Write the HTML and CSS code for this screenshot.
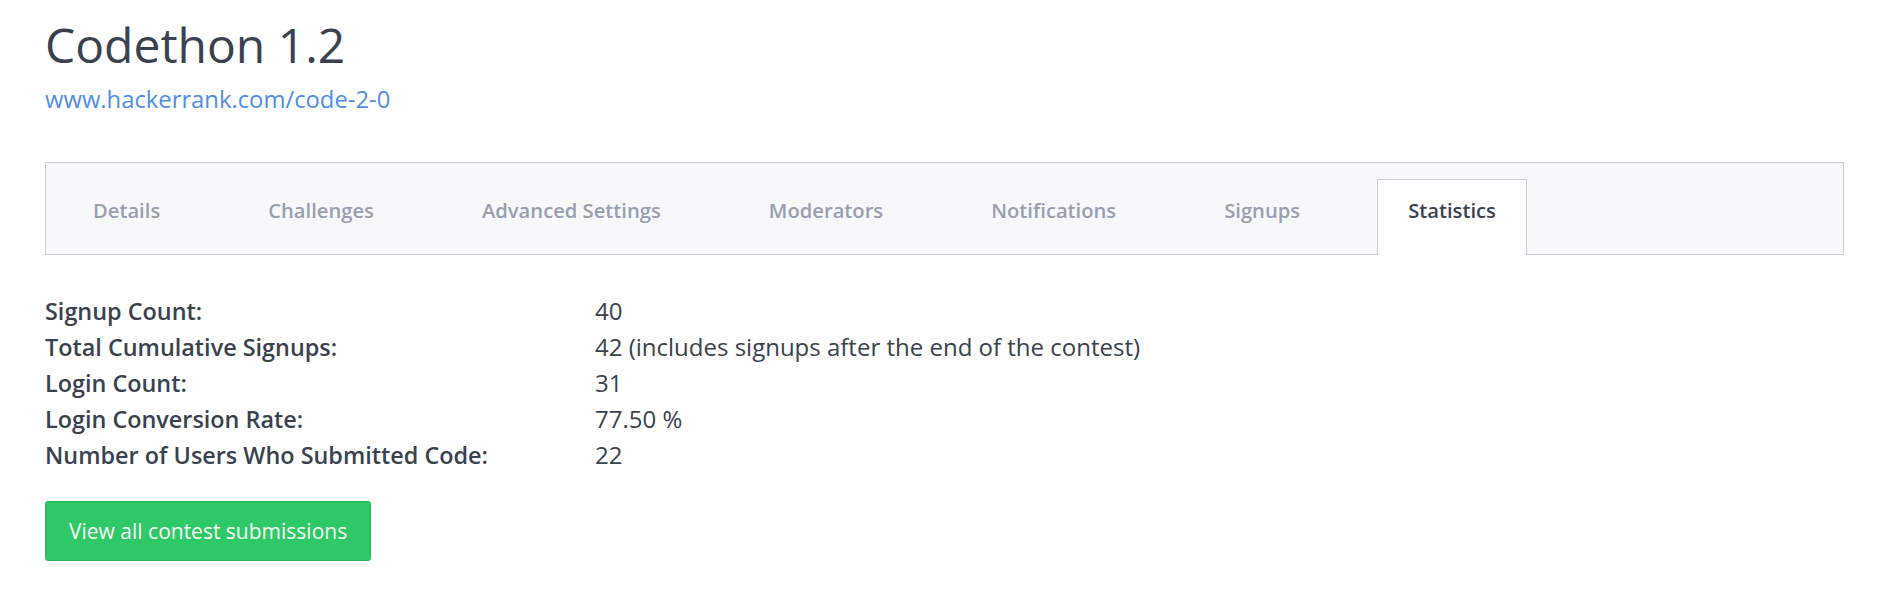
FILE: index.html
```html
<!DOCTYPE html>
<html lang="en">
<head>
<meta charset="utf-8">
<title>Codethon 1.2</title>
<link rel="stylesheet" href="styles.css">
</head>
<body>
<div class="page">
  <h1 class="title">Codethon 1.2</h1>
  <a class="contest-link" href="#">www.hackerrank.com/code-2-0</a>

  <nav class="tabbar">
    <ul class="tabs">
      <li class="tab">Details</li>
      <li class="tab">Challenges</li>
      <li class="tab">Advanced Settings</li>
      <li class="tab">Moderators</li>
      <li class="tab">Notifications</li>
      <li class="tab">Signups</li>
      <li class="tab tab-active">Statistics</li>
    </ul>
  </nav>

  <dl class="stats">
    <dt>Signup Count:</dt><dd>40</dd>
    <dt>Total Cumulative Signups:</dt><dd>42 (includes signups after the end of the contest)</dd>
    <dt>Login Count:</dt><dd>31</dd>
    <dt>Login Conversion Rate:</dt><dd>77.50 %</dd>
    <dt>Number of Users Who Submitted Code:</dt><dd>22</dd>
  </dl>

  <button class="btn-green" type="button">View all contest submissions</button>
</div>
</body>
</html>
```

FILE: styles.css
```css
html, body {
  margin: 0;
  padding: 0;
  background: #ffffff;
}

body {
  font-family: "Open Sans", "Liberation Sans", sans-serif;
  color: #39424e;
}

.page {
  padding: 12px 41px 0 45px;
  display: flex;
  flex-direction: column;
  align-items: flex-start;
}

.title {
  margin: 0;
  font-size: 48px;
  font-weight: 400;
  line-height: 66px;
  color: #39424e;
}

.contest-link {
  margin-top: 5px;
  font-size: 23.8px;
  line-height: 33px;
  color: #4f8ee6;
  text-decoration: none;
}

.tabbar {
  align-self: stretch;
  margin-top: 46px;
  background: #f7f8f9;
  border: 1px solid #c8ccd2;
  padding: 16px 0 0 16px;
}

.tabs {
  list-style: none;
  margin: 0 0 -1px 0;
  padding: 0;
  display: flex;
  gap: 46px;
}

.tab {
  box-sizing: border-box;
  height: 76px;
  padding: 15px 30px 0;
  border: 1px solid transparent;
  border-bottom: none;
  font-size: 20.2px;
  font-weight: 600;
  line-height: 31px;
  color: #979faf;
  white-space: nowrap;
}

.tab-active {
  background: #ffffff;
  border-color: #c8ccd2;
  color: #39424e;
}

.stats {
  margin: 38px 0 0 0;
  display: grid;
  grid-template-columns: 550px auto;
  font-size: 24px;
  line-height: 36px;
}

.stats dt {
  font-size: 23.4px;
  font-weight: 600;
  color: #39424e;
}

.stats dd {
  margin: 0;
  color: #39424e;
}

.btn-green {
  margin-top: 28px;
  height: 60px;
  padding: 0 23px;
  background: #2ec866;
  border: 1px solid #27b35a;
  border-radius: 3px;
  color: #f4fff7;
  font-family: "Open Sans", "Liberation Sans", sans-serif;
  font-size: 21px;
  font-weight: 400;
  line-height: 30px;
}
```
